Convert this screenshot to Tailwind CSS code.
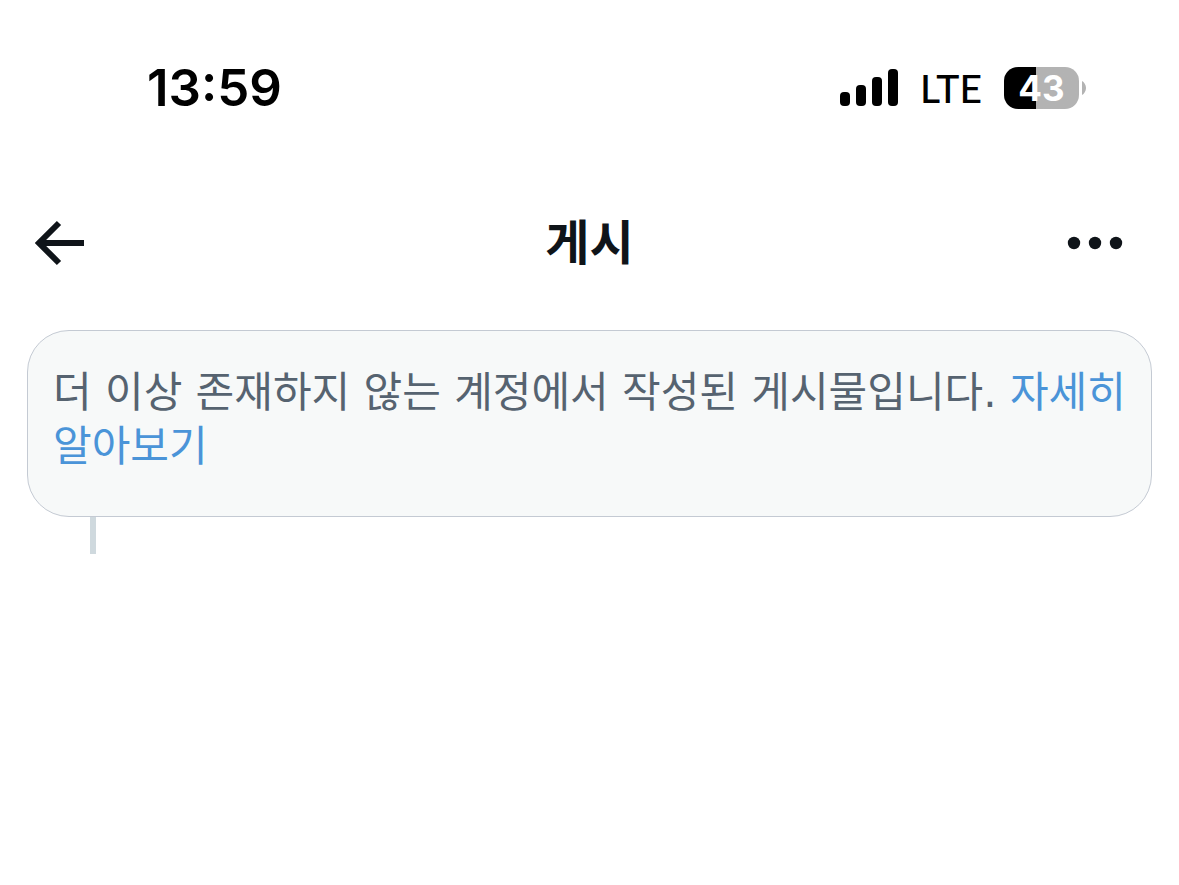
<!DOCTYPE html>
<html lang="ko">
<head>
    <meta charset="UTF-8">
    <meta name="viewport" content="width=device-width, initial-scale=1.0">
    <title>게시</title>
    <script src="https://cdn.jsdelivr.net/npm/@tailwindcss/browser@4"></script>
</head>
<body class="min-h-screen bg-white font-['Inter','Noto_Sans_CJK_KR',sans-serif] text-[#0f1419]">
    <!-- Status bar -->
    <div class="flex items-center justify-between pt-14 pr-[93px] pl-[147px] text-black">
        <time class="text-[51px] leading-[64px] font-semibold">13:59</time>
        <div class="flex items-center gap-[22px]">
            <svg class="h-[38px] w-[58px]" viewBox="0 0 58 38" fill="currentColor" aria-hidden="true">
                <rect x="0" y="23" width="10" height="14" rx="4"/>
                <rect x="16" y="16" width="10" height="21" rx="4"/>
                <rect x="32" y="8" width="10" height="29" rx="4"/>
                <rect x="48" y="0" width="10" height="37" rx="4"/>
            </svg>
            <span class="font-['Lato',sans-serif] text-[39px] leading-[64px] font-medium">LTE</span>
            <div class="flex items-center gap-[3px]">
                <div class="flex h-[42px] w-[75px] items-center justify-center rounded-[14px] bg-linear-to-r from-black from-[32px] to-[#b3b3b3] to-[32px] text-[35px] font-bold text-white">43</div>
                <svg class="h-[14px] w-1" viewBox="0 0 4 14" fill="#b3b3b3" aria-hidden="true">
                    <path d="M0 0c2 1 4 4 4 7s-2 6-4 7z"/>
                </svg>
            </div>
        </div>
    </div>

    <header class="mt-[75px] grid grid-cols-3 items-center px-[34px]">
        <button type="button" aria-label="뒤로" class="justify-self-start">
            <svg class="h-[46px] w-[50px]" viewBox="0 0 50 46" fill="none" stroke="currentColor" stroke-width="6" aria-hidden="true">
                <path d="M25 3 5 23l20 20M5 23h45"/>
            </svg>
        </button>
        <h1 class="text-center text-[48px] leading-[96px] font-bold">게시</h1>
        <button type="button" aria-label="더 보기" class="mr-[22px] justify-self-end">
            <svg class="h-[14px] w-[56px]" viewBox="0 0 56 14" fill="currentColor" aria-hidden="true">
                <circle cx="7" cy="7" r="6.2"/>
                <circle cx="28" cy="7" r="6.2"/>
                <circle cx="49" cy="7" r="6.2"/>
            </svg>
        </button>
    </header>

    <main class="mt-[39px] px-[27px]">
        <p class="rounded-[42px] border border-[#c4cad3] bg-[#f7f9f9] px-[25px] pt-[35px] pb-[42px] font-['DejaVu_Sans','Noto_Sans_CJK_KR',sans-serif] text-[42px] leading-[54px] text-[#566370]">더 이상 존재하지 않는 계정에서 작성된 게시물입니다. <a href="#" class="text-[#4a94d8]">자세히 알아보기</a></p>
        <div class="ml-[63px] h-[37px] w-[6px] bg-[#cfd9de]"></div>
    </main>
</body>
</html>
